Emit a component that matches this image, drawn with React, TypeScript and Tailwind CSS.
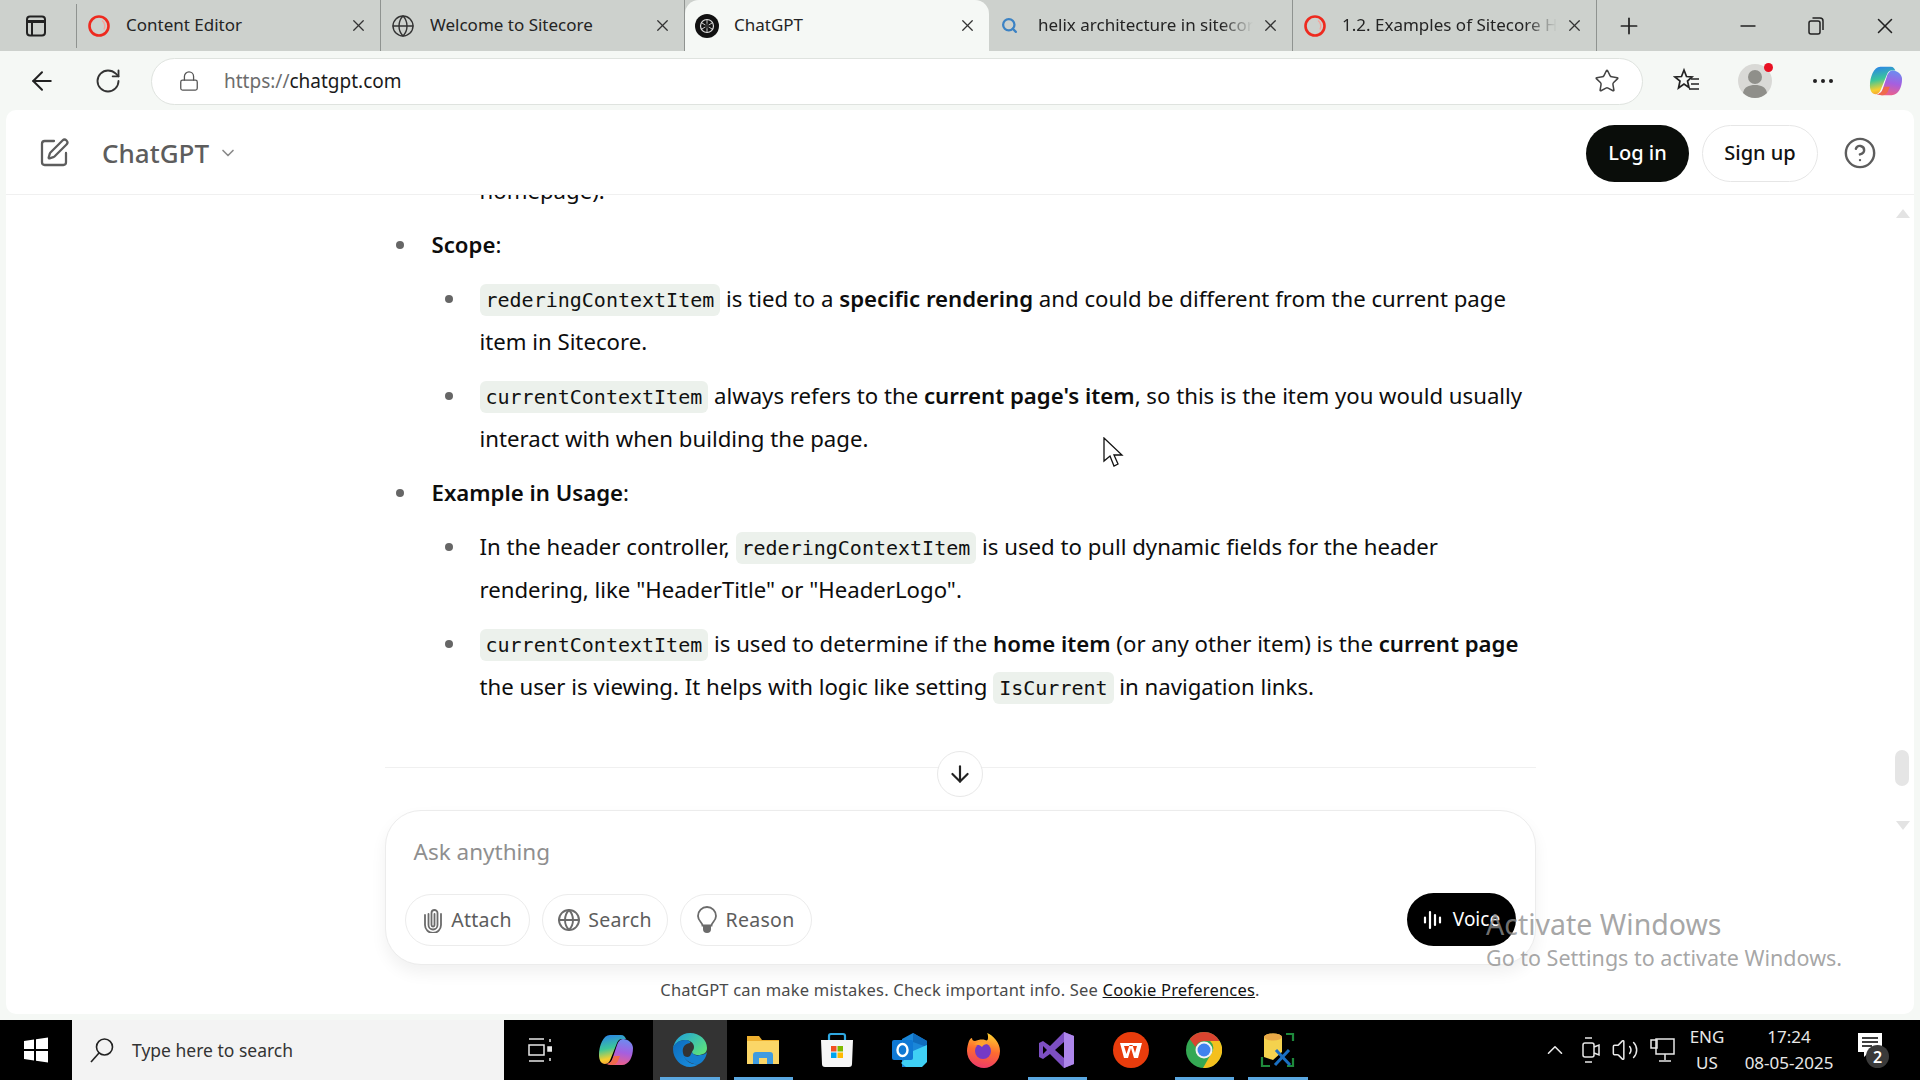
import { ArrowDown, ArrowLeft, ChevronDown, ChevronUp, CircleHelp, Globe, Lock, Minus, Plus, RotateCw, Search, SquarePen, Star, Volume2, X } from "lucide-react";
import type { ReactNode } from "react";

const ui = "font-['Noto_Sans',sans-serif]";

function SitecoreIcon() {
  return (
    <svg width="24" height="24" viewBox="0 0 24 24" fill="none">
      <circle cx="12" cy="12" r="9.5" stroke="#ee2a1f" strokeWidth="2.6" />
      <path d="M15 6.500a7 7 0 0 1 2 9" stroke="#f6a39c" strokeWidth="1.500" />
    </svg>
  );
}

function GptIcon() {
  return (
    <svg width="24" height="24" viewBox="0 0 24 24" fill="none">
      <circle cx="12" cy="12" r="12" fill="#111" />
      <circle cx="12" cy="12" r="6.500" stroke="#ddd" strokeWidth="1.200" />
      <path d="M12 5.500v13M6.400 8.700l11.200 6.600M6.400 15.300l11.200-6.600" stroke="#ddd" strokeWidth="0.900" />
      <circle cx="12" cy="12" r="2.500" fill="#333" />
    </svg>
  );
}

function CopilotIcon({ id, size }: { id: string; size: number }) {
  return (
    <svg width={size} height={size} viewBox="0 0 36 36" fill="none">
      <defs>
        <linearGradient id={id + "a"} x1="0.3" y1="0" x2="0.5" y2="1">
          <stop offset="0" stopColor="#2b86e6" />
          <stop offset="0.45" stopColor="#3cc79a" />
          <stop offset="0.8" stopColor="#f8cf2e" />
          <stop offset="1" stopColor="#f59a35" />
        </linearGradient>
        <linearGradient id={id + "b"} x1="0.6" y1="0" x2="0.4" y2="1">
          <stop offset="0" stopColor="#6d8bf0" />
          <stop offset="0.5" stopColor="#a55fe0" />
          <stop offset="1" stopColor="#ef5f86" />
        </linearGradient>
      </defs>
      <path d="M12 3h11c3 0 4 2 5 4h-4c-3 0-4 2-5 4l-6 15c-1 3-3 6-6 6-4 0-6-4-6-9 0-9 4-20 11-20z" fill={`url(#${id}a)`} />
      <path d="M24 33H13c-3 0-4-2-5-1 3 0 5-2 6-4l5-15c1-3 3-6 6-6 5 0 10 4 10 9 0 9-4 17-11 17z" fill={`url(#${id}b)`} />
      <path d="M8 32c3 0 5-2 6-4l2-4h6l-2 5c-1 2-3 4-6 4z" fill="#ef6a4c" />
    </svg>
  );
}

function EdgeIcon() {
  return (
    <svg width="36" height="36" viewBox="0 0 36 36" fill="none">
      <defs>
        <linearGradient id="edgeTop" x1="0" y1="0" x2="1" y2="0.7">
          <stop offset="0" stopColor="#1b9de2" />
          <stop offset="1" stopColor="#5adf7f" />
        </linearGradient>
        <linearGradient id="edgeLow" x1="0" y1="0" x2="1" y2="1">
          <stop offset="0" stopColor="#0c6cbc" />
          <stop offset="1" stopColor="#1b90e0" />
        </linearGradient>
      </defs>
      <path d="M18 1c10 0 17 7 17 15 0 5-4 7-9 7-3 0-6-1-6-3 0-1 2-2 2-5 0-4-4-7-9-7C7 8 2 12 1 17 2 8 9 1 18 1z" fill="url(#edgeTop)" />
      <path d="M1 17c0-5 6-9 12-9 4 0 6 2 5 3-6 1-8 5-7 10 1 6 7 13 16 11-3 2-6 3-9 3C9 35 1 27 1 17z" fill="url(#edgeLow)" />
      <path d="M20 20c1 3 5 4 8 3 3 0 6-1 7-3-1 6-4 10-8 12-8 1-15-4-16-10 1 3 5 4 7 2z" fill="#157fcf" />
    </svg>
  );
}

function FolderIcon() {
  return (
    <svg width="34" height="30" viewBox="0 0 34 30" fill="none">
      <path d="M1 1h12l3 4h17v24H1z" fill="#eeb02f" />
      <path d="M1 6h32v23H1z" fill="#fbd667" />
      <path d="M7 29v-9a3 3 0 0 1 3-3h14a3 3 0 0 1 3 3v9h-6v-6h-8v6z" fill="#3f9be0" />
    </svg>
  );
}

function StoreIcon() {
  return (
    <svg width="34" height="36" viewBox="0 0 34 36" fill="none">
      <path d="M9 9V4a2 2 0 0 1 2-2h12a2 2 0 0 1 2 2v5" stroke="#2fa7e0" strokeWidth="2.200" />
      <path d="M1 8h32l-1 24a3 3 0 0 1-3 3H5a3 3 0 0 1-3-3z" fill="#f6f6f6" />
      <rect x="11" y="14" width="5.500" height="5.500" fill="#f25022" />
      <rect x="17.500" y="14" width="5.500" height="5.500" fill="#7fba00" />
      <rect x="11" y="20.500" width="5.500" height="5.500" fill="#00a4ef" />
      <rect x="17.500" y="20.500" width="5.500" height="5.500" fill="#ffb900" />
    </svg>
  );
}

function OutlookIcon() {
  return (
    <svg width="36" height="36" viewBox="0 0 36 36" fill="none">
      <path d="M10 7l11-6 14 8v20l-14 6H10z" fill="#1a86d8" />
      <path d="M21 1l14 8v6l-14-5z" fill="#0f6cbd" />
      <path d="M21 19l14-6v17l-5 5H14l-5-4z" fill="#3fd0f5" />
      <rect x="0" y="8" width="21" height="20" rx="2" fill="#0f78d4" />
      <ellipse cx="10.500" cy="18" rx="5" ry="6" stroke="#fff" strokeWidth="2.400" />
    </svg>
  );
}

function FirefoxIcon() {
  return (
    <svg width="36" height="36" viewBox="0 0 36 36" fill="none">
      <defs>
        <linearGradient id="fox" x1="0.6" y1="0" x2="0.4" y2="1">
          <stop offset="0" stopColor="#ffd02f" />
          <stop offset="0.5" stopColor="#ff6b2f" />
          <stop offset="1" stopColor="#ec3a6a" />
        </linearGradient>
      </defs>
      <path d="M3 9c1-2 2-3 3-3 0 2 1 3 3 3 3-1 7-2 10-1 2 1 3 0 3-2 0-2 0-4-1-5 6 2 13 10 13 18 0 10-8 17-16 17S1 29 1 19c0-4 1-7 2-10z" fill="url(#fox)" />
      <circle cx="17" cy="19" r="8" fill="#7439c6" />
      <path d="M8 13c3-4 10-5 14-1-3 0-5 1-6 3-2-2-5-3-8-2z" fill="#ffa22f" />
    </svg>
  );
}

function VsIcon() {
  return (
    <svg width="36" height="38" viewBox="0 0 36 38" fill="none">
      <path d="M25 1L11 15 4 10 0 12v14l4 2 7-5 14 14 10-4V5z" fill="#7d4fc2" />
      <path d="M25 1l10 4v28l-10 4z" fill="#ad86ea" />
      <path d="M25 11l-9 8 9 8zM4 15v8l4-4z" fill="#000" />
    </svg>
  );
}

function WpsIcon() {
  return (
    <svg width="36" height="36" viewBox="0 0 36 36" fill="none">
      <circle cx="18" cy="18" r="18" fill="#e83c0c" />
      <path d="M7 11h22l-4 15h-4l-3-10-3 10h-4zM11 14l2.500 8 3-9h3l2.500 8 2-7z" fill="#fff" fillRule="evenodd" />
    </svg>
  );
}

function ChromeIcon() {
  return (
    <svg width="36" height="36" viewBox="0 0 36 36" fill="none">
      <circle cx="18" cy="18" r="18" fill="#34a853" />
      <path d="M18 0a18 18 0 0 1 15.600 9H18a9 9 0 0 0-8.500 6L3.700 7A18 18 0 0 1 18 0z" fill="#d9442f" />
      <path d="M33.600 9A18 18 0 0 1 17 36l8-14a9 9 0 0 0-1-13z" fill="#f4c01e" />
      <circle cx="18" cy="18" r="8.500" fill="#f2f2f2" />
      <circle cx="18" cy="18" r="6.500" fill="#3f82ee" />
    </svg>
  );
}

function ToolIcon() {
  return (
    <svg width="36" height="36" viewBox="0 0 36 36" fill="none">
      <path d="M4 5a9 3.500 0 0 1 18 0v15l-9 8-9-3z" fill="#f4d24e" />
      <ellipse cx="13" cy="5" rx="9" ry="3.500" fill="#e8a847" />
      <path d="M26 2h7v7M2 25v9h8M33 26v8h-6" stroke="#1e8a3c" strokeWidth="2.200" />
      <path d="M15 33l14-15M30 33L16 18" stroke="#1a6fc4" strokeWidth="3" />
    </svg>
  );
}

function NavTab({ icon, label, active, fade }: { icon: ReactNode; label: string; active?: boolean; fade?: boolean }) {
  return (
    <div className={`relative flex h-[51px] w-[304px] shrink-0 items-center pl-[9px] pr-[12px] ${active ? "rounded-t-[14px] bg-[#f5f8f5]" : "border-r border-[#8f9390]"}`}>
      <div className="ml-[1px] flex w-[39px] shrink-0 items-center">{icon}</div>
      <span className={`min-w-0 flex-1 overflow-hidden whitespace-nowrap pb-[2px] text-[17px] text-[#242424] ${fade ? "[mask-image:linear-gradient(to_right,black_85%,transparent)]" : ""}`}>{label}</span>
      <X className="ml-2 shrink-0 text-[#333]" size={19} strokeWidth={1.6} />
    </div>
  );
}

function Code({ children }: { children: ReactNode }) {
  return <code className="rounded-[6px] bg-[#ecf1ec] px-[6px] py-[4px] font-['DejaVu_Sans_Mono',monospace] text-[20px] text-[#111]">{children}</code>;
}

function B({ children }: { children: ReactNode }) {
  return <strong className="font-semibold text-[#0d0d0d]">{children}</strong>;
}

function Pill({ icon, label, w }: { icon: ReactNode; label: string; w: string }) {
  return (
    <div className={`flex h-[52px] ${w} items-center justify-center gap-[7px] rounded-full border border-[#ececec] text-[19.500px] tracking-[0.3px] text-[#5d5d5d]`}>
      {icon}
      {label}
    </div>
  );
}

function TaskIcon({ children, active, running }: { children: ReactNode; active?: boolean; running?: boolean }) {
  return (
    <div className={`relative flex h-[60px] w-[73.500px] items-center justify-center ${active ? "bg-[#333]" : ""}`}>
      {children}
      {running && <div className="absolute bottom-0 left-[7px] right-[7px] h-[3px] bg-[#5aa7e0]" />}
    </div>
  );
}

export default function App() {
  return (
    <div className={`relative flex h-[1080px] w-[1920px] flex-col overflow-hidden bg-[#f5f8f5] ${ui}`}>
      {/* Tab strip */}
      <div className="flex h-[51px] shrink-0 items-center bg-[#cdd1cd]">
        <div className="flex w-[77px] shrink-0 justify-center border-r border-[#8f9390] py-[10px] pr-[4px]">
          <svg width="24" height="24" viewBox="0 0 24 24" fill="none" stroke="#222" strokeWidth="2">
            <rect x="3" y="2.500" width="18" height="19" rx="3" />
            <path d="M3 7.500h18" strokeWidth="3" />
            <path d="M8 8v13" />
          </svg>
        </div>
        <NavTab icon={<SitecoreIcon />} label="Content Editor" />
        <NavTab icon={<Globe size={24} strokeWidth={1.4} className="text-[#333]" />} label="Welcome to Sitecore" />
        <NavTab icon={<GptIcon />} label="ChatGPT" active />
        <NavTab icon={<Search size={17} strokeWidth={3.2} className="ml-[2px] text-[#3b82c4]" />} label="helix architecture in sitecore" fade />
        <NavTab icon={<SitecoreIcon />} label="1.2. Examples of Sitecore Helix" fade />
        <Plus className="ml-[19px] text-[#222]" size={26} strokeWidth={1.6} />
        <div className="ml-auto flex items-center gap-[44px] pr-[22px] text-[#222]">
          <Minus size={24} strokeWidth={1.4} />
          <svg width="24" height="24" viewBox="0 0 24 24" fill="none" stroke="#222" strokeWidth="1.5">
            <rect x="5" y="7" width="11" height="13" rx="2" />
            <path d="M8.500 4h7.500a3 3 0 0 1 3 3v9" />
          </svg>
          <X size={26} strokeWidth={1.4} />
        </div>
      </div>

      {/* Toolbar */}
      <div className="flex h-[59px] shrink-0 items-center pt-[1px]">
        <ArrowLeft className="ml-[27px] text-[#222]" size={30} strokeWidth={1.6} />
        <RotateCw className="ml-[37px] text-[#333]" size={28} strokeWidth={1.6} />
        <div className="ml-[29px] flex h-[47px] w-[1492px] items-center rounded-full border border-[#dfe3df] bg-white pl-[26px] pr-[22px]">
          <Lock size={22} strokeWidth={1.4} className="text-[#555]" />
          <span className="ml-[24px] text-[19px]"><span className="text-[#6d6d6d]">https://</span><span className="text-[#1a1a1a]">chatgpt.com</span></span>
          <Star className="ml-auto text-[#444]" size={26} strokeWidth={1.4} />
        </div>
        <svg className="ml-[30px]" width="28" height="28" viewBox="0 0 28 28" fill="none" stroke="#222" strokeWidth="1.7">
          <path d="M11 3l2.500 6.500 5.500.5-4.500 4 1.500 6.500-5-3.500-5.500 4 1.500-7L2 10l6.500-.5z" />
          <path d="M18 12h8M18 17h8M16 22h10" />
        </svg>
        <div className="relative ml-[37px] flex h-[34px] w-[34px] items-center justify-center">
          <svg width="34" height="34" viewBox="0 0 34 34"><circle cx="17" cy="17" r="17" fill="#d9d9d6" /><circle cx="17" cy="13" r="7" fill="#8f8f8a" /><path d="M5 29c1-6 6-8 12-8s11 2 12 8a17 17 0 0 1-24 0z" fill="#8f8f8a" /></svg>
          <div className="absolute -right-[1px] -top-[1px] h-[9px] w-[9px] rounded-full bg-[#e81123]" />
        </div>
        <div className="ml-[41px] flex gap-[4px]">
          <span className="h-[4px] w-[4px] rounded-full bg-[#222]" />
          <span className="h-[4px] w-[4px] rounded-full bg-[#222]" />
          <span className="h-[4px] w-[4px] rounded-full bg-[#222]" />
        </div>
        <div className="ml-[36px] flex"><CopilotIcon id="copA" size={34} /></div>
      </div>

      {/* Page card */}
      <div className="relative mx-[6px] flex h-[904px] shrink-0 flex-col overflow-hidden rounded-[10px] bg-white">
        <div className="flex h-[85px] shrink-0 items-center border-b border-[#f0f0f0] pl-[32px] pr-[37px] pt-[2px]">
          <SquarePen className="text-[#5d5d5d]" size={32} strokeWidth={1.7} />
          <span className="ml-[32px] text-[26px] font-medium text-[#5d5d5d]">ChatGPT</span>
          <ChevronDown className="ml-[9px] text-[#8a8a8a]" size={20} strokeWidth={2} />
          <div className="ml-auto flex h-[57px] w-[103px] items-center justify-center rounded-full bg-[#0a0d0a] text-[20px] font-medium text-white">Log in</div>
          <div className="ml-[13px] flex h-[57px] w-[116px] items-center justify-center rounded-full border border-[#e6e6e6] text-[20px] font-medium text-[#111]">Sign up</div>
          <CircleHelp className="ml-[25px] text-[#5d5d5d]" size={34} strokeWidth={1.7} />
        </div>

        {/* Conversation */}
        <div className="mx-auto h-[573px] w-[1151px] shrink-0 overflow-hidden border-b border-[#f0f0f0] text-[22.200px] leading-[42px] text-[#0d0d0d] whitespace-nowrap">
          <p className="-mt-[25px] pl-[95px]">homepage).</p>
          <ul className="mt-[12px] flex flex-col gap-[12px]">
            <li className="relative pl-[47px]">
              <span className="absolute left-[11px] top-[17px] h-[8px] w-[8px] rounded-full bg-[#666]" />
              <B>Scope</B>:
              <ul className="mt-[12px] flex flex-col gap-[12px]">
                <li className="relative pl-[48px]">
                  <span className="absolute left-[13px] top-[17px] h-[8px] w-[8px] rounded-full bg-[#666]" />
                  <Code>rederingContextItem</Code> is tied to a <B>specific rendering</B> and could be different from the current page<br />item in Sitecore.
                </li>
                <li className="relative pl-[48px]">
                  <span className="absolute left-[13px] top-[17px] h-[8px] w-[8px] rounded-full bg-[#666]" />
                  <Code>currentContextItem</Code> always refers to the <B>current page's item</B>, so this is the item you would usually<br />interact with when building the page.
                </li>
              </ul>
            </li>
            <li className="relative pl-[47px]">
              <span className="absolute left-[11px] top-[17px] h-[8px] w-[8px] rounded-full bg-[#666]" />
              <B>Example in Usage</B>:
              <ul className="mt-[12px] flex flex-col gap-[12px]">
                <li className="relative pl-[48px]">
                  <span className="absolute left-[13px] top-[17px] h-[8px] w-[8px] rounded-full bg-[#666]" />
                  In the header controller, <Code>rederingContextItem</Code> is used to pull dynamic fields for the header<br />rendering, like "HeaderTitle" or "HeaderLogo".
                </li>
                <li className="relative pl-[48px]">
                  <span className="absolute left-[13px] top-[17px] h-[8px] w-[8px] rounded-full bg-[#666]" />
                  <Code>currentContextItem</Code> is used to determine if the <B>home item</B> (or any other item) is the <B>current page</B><br />the user is viewing. It helps with logic like setting <Code>IsCurrent</Code> in navigation links.
                </li>
              </ul>
            </li>
          </ul>
        </div>

        {/* Composer */}
        <div className="mx-auto mt-[42px] flex h-[155px] w-[1151px] shrink-0 flex-col rounded-[36px] border border-[#ececec] bg-white px-[19px] pb-[18px] shadow-[0_8px_16px_rgba(0,0,0,0.06)]">
          <div className="flex-1 pl-[9px] pt-[24px] text-[22.500px] leading-[34px] text-[#8f8f8f]">Ask anything</div>
          <div className="flex items-center gap-[12px]">
            <Pill
              icon={
                <svg width="22" height="26" viewBox="0 0 22 26" fill="none" stroke="#6b6b6b" strokeWidth="1.800" strokeLinecap="round">
                  <path d="M6.500 7v11a4.500 4.500 0 0 0 9 0V6a3 3 0 0 0-6 0v12a1.500 1.500 0 0 0 3 0V7" />
                  <path d="M3 8v10a8 8 0 0 0 16 0V7" />
                </svg>
              }
              label="Attach"
              w="w-[125px]"
            />
            <Pill icon={<Globe className="text-[#6b6b6b]" size={24} strokeWidth={1.900} />} label="Search" w="w-[126px]" />
            <Pill
              icon={
                <svg width="22" height="28" viewBox="0 0 22 28" fill="none" stroke="#6b6b6b" strokeWidth="1.800">
                  <path d="M6.500 19.500c0-3-4.500-4.500-4.500-9.500a9 9 0 0 1 18 0c0 5-4.500 6.500-4.500 9.500z" />
                  <path d="M7 20h8v3a4 4 0 0 1-8 0z" fill="#6b6b6b" stroke="none" />
                </svg>
              }
              label="Reason"
              w="w-[132px]"
            />
            <div className="ml-auto flex h-[53px] w-[109px] items-center justify-center gap-[7px] rounded-full bg-black text-[19px] text-white">
              <svg width="24" height="24" viewBox="0 0 24 24" stroke="#fff" strokeLinecap="round" strokeWidth="2.200"><path d="M3 9.500v5M8 4v16M13 7v10M18 9.500v5" /></svg>
              Voice
            </div>
          </div>
        </div>
        <div className="pt-[13px] text-center text-[16.500px] leading-[24px] tracking-[0.2px] text-[#4a4a4a]">
          ChatGPT can make mistakes. Check important info. See <span className="text-[#111] underline">Cookie Preferences</span>.
        </div>

        {/* Scroll-to-bottom button on the divider */}
        <div className="absolute left-[931px] top-[641px] flex h-[46px] w-[46px] items-center justify-center rounded-full border border-[#e8e8e8] bg-white">
          <ArrowDown className="text-[#222]" size={26} strokeWidth={2} />
        </div>

        {/* Scrollbar */}
        <svg className="absolute left-[1890px] top-[99px]" width="14" height="9" viewBox="0 0 14 9" fill="#e3e3e3"><path d="M7 0l7 9H0z" /></svg>
        <div className="absolute left-[1889px] top-[640px] h-[36px] w-[14px] rounded-full bg-[#e5e5e5]" />
        <svg className="absolute left-[1890px] top-[711px]" width="14" height="9" viewBox="0 0 14 9" fill="#e3e3e3"><path d="M0 0h14l-7 9z" /></svg>
      </div>

      {/* Taskbar */}
      <div className="absolute bottom-0 left-0 flex h-[60px] w-[1920px] items-center bg-black text-[#e8e8e8]">
        <div className="flex w-[72px] justify-center">
          <svg width="26" height="26" viewBox="0 0 26 26" fill="#fff"><path d="M1 4l10-1.500V12H1zM13 2.200L25 .500V12H13zM1 14h10v9.500L1 22zM13 14h12v11.500l-12-1.700z" /></svg>
        </div>
        <div className="flex h-[60px] w-[432px] items-center bg-[#f3f3f3] pl-[17px] text-[17.500px] text-[#333]">
          <svg width="26" height="26" viewBox="0 0 26 26" fill="none" stroke="#222" strokeWidth="1.600"><circle cx="15.500" cy="10" r="8" /><path d="M10 16L2 25" /></svg>
          <span className="ml-[17px]">Type here to search</span>
        </div>
        <div className="flex w-[75.500px] justify-center pr-[5px]">
          <svg width="26" height="26" viewBox="0 0 26 26" fill="none" stroke="#e8e8e8" strokeWidth="1.500"><path d="M3 2h15M3 24h15" /><rect x="3" y="8" width="15" height="10" /><path d="M24 2v3M24 21v3" /><rect x="22" y="10" width="4" height="4" fill="#e8e8e8" /></svg>
        </div>
        <TaskIcon><CopilotIcon id="copB" size={36} /></TaskIcon>
        <TaskIcon active running><EdgeIcon /></TaskIcon>
        <TaskIcon running><FolderIcon /></TaskIcon>
        <TaskIcon><StoreIcon /></TaskIcon>
        <TaskIcon><OutlookIcon /></TaskIcon>
        <TaskIcon><FirefoxIcon /></TaskIcon>
        <TaskIcon running><VsIcon /></TaskIcon>
        <TaskIcon><WpsIcon /></TaskIcon>
        <TaskIcon running><ChromeIcon /></TaskIcon>
        <TaskIcon running><ToolIcon /></TaskIcon>
        <div className="ml-auto flex items-center">
          <ChevronUp size={26} strokeWidth={1.500} />
          <svg className="ml-[12px]" width="22" height="30" viewBox="0 0 22 30" fill="none" stroke="#e8e8e8" strokeWidth="1.500"><rect x="3" y="8" width="11" height="14" rx="2" /><path d="M14 12l5-2v10l-5-2M5 3h7M5 27h7" /></svg>
          <Volume2 className="ml-[9px]" size={28} strokeWidth={1.300} />
          <svg className="ml-[10px]" width="26" height="28" viewBox="0 0 26 28" fill="none" stroke="#e8e8e8" strokeWidth="1.500"><rect x="7" y="3" width="18" height="15" /><path d="M16 18v6M10 25h12M2 4h6v8H2z" /></svg>
          <div className="ml-[14px] flex w-[36px] flex-col items-center text-[17px] leading-[26px]"><span>ENG</span><span>US</span></div>
          <div className="ml-[18px] flex w-[92px] flex-col items-center text-[17px] leading-[26px]"><span>17:24</span><span>08-05-2025</span></div>
          <div className="relative ml-[22px] mr-[31px] h-[36px] w-[32px]">
            <svg width="26" height="28" viewBox="0 0 26 28" fill="#fff"><path d="M1 1h24v19H12l-5 5v-5H1z" /><path d="M5 6h16M5 10h16M5 14h10" stroke="#000" strokeWidth="1.400" /></svg>
            <div className="absolute bottom-[0px] right-[0px] flex h-[23px] w-[23px] items-center justify-center rounded-full bg-[#3a3a3a] text-[16px] font-semibold text-white">2</div>
          </div>
        </div>
      </div>

      {/* Activate Windows watermark */}
      <div className="pointer-events-none absolute left-[1486px] top-[905px] text-[#8f8f8f]/80">
        <div className="text-[28.500px] leading-[38px]">Activate Windows</div>
        <div className="text-[21.500px] leading-[30px]">Go to Settings to activate Windows.</div>
      </div>

      {/* Mouse pointer */}
      <svg className="absolute left-[1103px] top-[437px]" width="21" height="32" viewBox="0 0 21 32" fill="#fff" stroke="#111" strokeWidth="1.300">
        <path d="M1 1v23l6-5 4 10 4-2-4-9h8z" />
      </svg>
    </div>
  );
}
